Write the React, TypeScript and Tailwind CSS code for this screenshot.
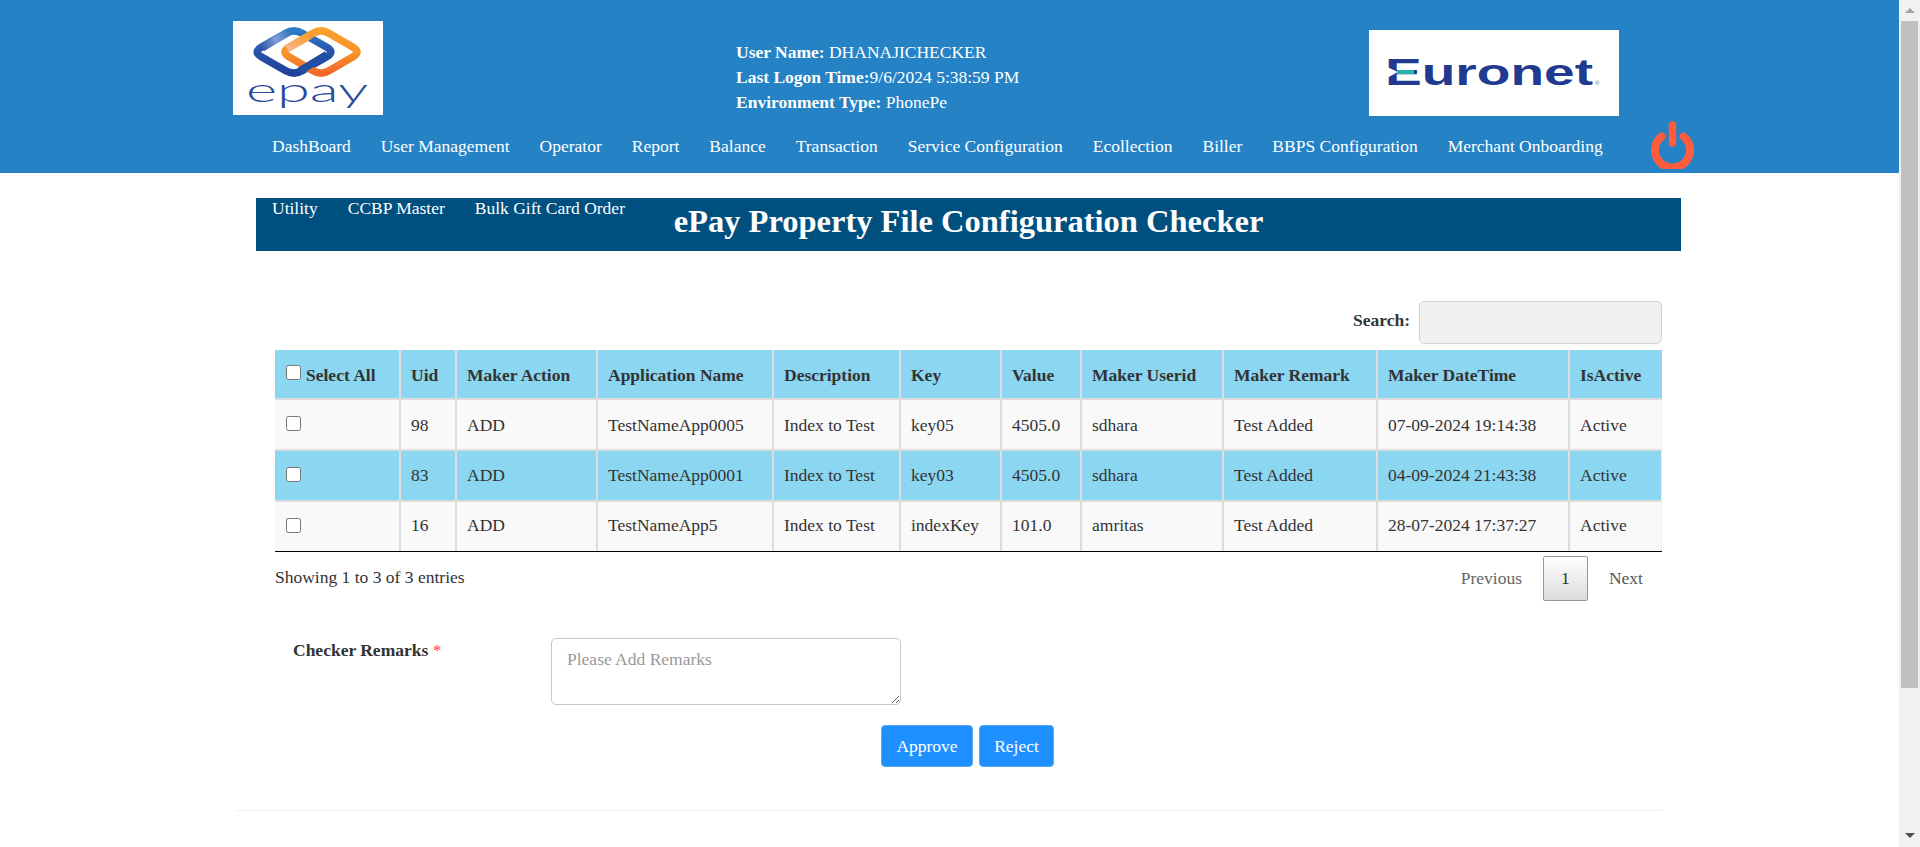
const columns = [
  { label: 'Uid', key: 'uid' },
  { label: 'Maker Action', key: 'action' },
  { label: 'Application Name', key: 'app' },
  { label: 'Description', key: 'desc' },
  { label: 'Key', key: 'key' },
  { label: 'Value', key: 'value' },
  { label: 'Maker Userid', key: 'user' },
  { label: 'Maker Remark', key: 'remark' },
  { label: 'Maker DateTime', key: 'date' },
  { label: 'IsActive', key: 'active' },
] as const;

const rows = [
  { uid: '98', action: 'ADD', app: 'TestNameApp0005', desc: 'Index to Test', key: 'key05', value: '4505.0', user: 'sdhara', remark: 'Test Added', date: '07-09-2024 19:14:38', active: 'Active' },
  { uid: '83', action: 'ADD', app: 'TestNameApp0001', desc: 'Index to Test', key: 'key03', value: '4505.0', user: 'sdhara', remark: 'Test Added', date: '04-09-2024 21:43:38', active: 'Active' },
  { uid: '16', action: 'ADD', app: 'TestNameApp5', desc: 'Index to Test', key: 'indexKey', value: '101.0', user: 'amritas', remark: 'Test Added', date: '28-07-2024 17:37:27', active: 'Active' },
];

const topMenu = ['DashBoard', 'User Management', 'Operator', 'Report', 'Balance', 'Transaction', 'Service Configuration', 'Ecollection', 'Biller', 'BBPS Configuration', 'Merchant Onboarding'];
const subMenu = ['Utility', 'CCBP Master', 'Bulk Gift Card Order'];

// rhombus with soft corners, t = how far along each edge the rounding starts
const diamond = (cx: number, cy: number, a: number, b: number, t = 0.2) => {
  const L = [cx - a, cy];
  const T = [cx, cy - b];
  const R = [cx + a, cy];
  const B = [cx, cy + b];
  const mix = (p: number[], q: number[], k: number) => `${p[0] + (q[0] - p[0]) * k} ${p[1] + (q[1] - p[1]) * k}`;
  return [
    `M${mix(L, T, t)}`,
    `L${mix(T, L, t)} Q${T[0]} ${T[1]} ${mix(T, R, t)}`,
    `L${mix(R, T, t)} Q${R[0]} ${R[1]} ${mix(R, B, t)}`,
    `L${mix(B, R, t)} Q${B[0]} ${B[1]} ${mix(B, L, t)}`,
    `L${mix(L, B, t)} Q${L[0]} ${L[1]} ${mix(L, T, t)} Z`,
  ].join(' ');
};

const EpayLogo = () => (
  <div className="w-[150px] h-[94px] bg-white shrink-0">
    <svg width="150" height="94" viewBox="0 0 150 94">
      <defs>
        <linearGradient id="blueRing" x1="0" y1="0" x2="0" y2="1">
          <stop offset="0" stopColor="#2f7cc6" />
          <stop offset="0.45" stopColor="#2a55ad" />
          <stop offset="1" stopColor="#1f429b" />
        </linearGradient>
        <linearGradient id="orangeRing" x1="0" y1="0" x2="0" y2="1">
          <stop offset="0" stopColor="#f9a02e" />
          <stop offset="0.55" stopColor="#f8922a" />
          <stop offset="1" stopColor="#f2662a" />
        </linearGradient>
        <linearGradient id="blueSheen" gradientUnits="userSpaceOnUse" x1="28" y1="28" x2="58" y2="10">
          <stop offset="0" stopColor="#2a50a8" />
          <stop offset="0.5" stopColor="#829dd5" />
          <stop offset="1" stopColor="#2a78c4" />
        </linearGradient>
        <linearGradient id="orangeSheen" gradientUnits="userSpaceOnUse" x1="54" y1="30" x2="76" y2="15">
          <stop offset="0" stopColor="#f7b896" />
          <stop offset="1" stopColor="#f9a02e" />
        </linearGradient>
      </defs>
      <path d={diamond(61, 31, 41, 23.5)} fill="none" stroke="url(#blueRing)" strokeWidth="7.5" />
      <path d="M29 27 L56 11" fill="none" stroke="url(#blueSheen)" strokeWidth="7.5" />
      <path d={diamond(88, 31, 40, 23.5)} fill="none" stroke="url(#orangeRing)" strokeWidth="7.5" />
      <path d="M54 28 L76 15" fill="none" stroke="url(#orangeSheen)" strokeWidth="7.5" />
      <path d="M94 33.5 L66 50.5" fill="none" stroke="#1f4ea3" strokeWidth="7.5" />
      <text x="13" y="81" fontSize="34" fill="#2b4a9b" textLength="122" lengthAdjust="spacingAndGlyphs" className="font-['Lato',sans-serif] font-light">epay</text>
    </svg>
  </div>
);

const EuronetLogo = () => (
  <div className="w-[250px] h-[86px] bg-white shrink-0">
    <svg width="250" height="86" viewBox="0 0 250 86">
      <text x="16" y="55" fontSize="36" fill="#1f3a8f" textLength="208" lengthAdjust="spacingAndGlyphs" className="font-['Liberation_Sans',sans-serif] font-bold">Euronet</text>
      <polygon points="16,36 29,42 16,49" fill="white" />
      <rect x="28" y="40" width="17" height="4" fill="#1fb8a8" />
      <text x="226" y="55" fontSize="6" fill="#5a6fb0" className="font-['Liberation_Sans',sans-serif]">®</text>
    </svg>
  </div>
);

const PowerIcon = () => (
  <svg width="43" height="48" viewBox="0 0 43 48" className="shrink-0 ml-[48px]">
    <path d="M10.5 15.5 A17.5 17.5 0 1 0 32.5 15.5" fill="none" stroke="#ff5c3e" strokeWidth="8" strokeLinecap="round" />
    <path d="M21.5 4 L21.5 22" fill="none" stroke="#ff5c3e" strokeWidth="7.5" strokeLinecap="round" />
  </svg>
);

const Scrollbar = () => (
  <div className="w-[21px] shrink-0 bg-[#f1f1f1] flex flex-col items-center">
    <div className="h-[21px] flex items-center justify-center">
      <div className="w-0 h-0 border-x-[5px] border-x-transparent border-b-[5px] border-b-[#a3a3a3]" />
    </div>
    <div className="w-[17px] h-[667px] bg-[#c1c1c1]" />
    <div className="flex-1 flex items-end justify-center pb-[9px]">
      <div className="w-0 h-0 border-x-[5px] border-x-transparent border-t-[5px] border-t-[#505050]" />
    </div>
  </div>
);

export default function App() {
  return (
    <div className="flex h-screen overflow-hidden bg-white text-[17.5px] text-[#333] font-['Liberation_Serif',serif]">
      <div className="flex-1 min-w-0">
        {/* Header */}
        <header className="h-[173px] bg-[#2482c5] text-white">
          <div className="flex h-[121px] pl-[233px]">
            <div className="mt-[21px]"><EpayLogo /></div>
            <div className="ml-[353px] w-[633px] mt-[40px] leading-[25px]">
              <div><b>User Name:</b> DHANAJICHECKER</div>
              <div><b>Last Logon Time:</b>9/6/2024 5:38:59 PM</div>
              <div><b>Environment Type:</b> PhonePe</div>
            </div>
            <div className="mt-[30px]"><EuronetLogo /></div>
          </div>
          <nav className="flex items-center h-[48px] pl-[272px]">
            <div className="flex gap-[30px] whitespace-nowrap pt-[2px]">
              {topMenu.map((item) => (
                <span key={item}>{item}</span>
              ))}
            </div>
            <PowerIcon />
          </nav>
        </header>

        {/* Title banner */}
        <div className="relative mt-[25px] mx-[256px] w-[1425px] h-[53px] bg-[#00507f] text-white flex items-center justify-center">
          <h1 className="text-[32.5px] font-bold leading-none mt-[-6px]">ePay Property File Configuration Checker</h1>
          <div className="absolute left-[16px] top-0 flex gap-[30px] leading-[20px]">
            {subMenu.map((item) => (
              <span key={item}>{item}</span>
            ))}
          </div>
        </div>

        <div className="w-[1387px] ml-[275px]">
          {/* Search */}
          <div className="flex justify-end items-center mt-[50px] h-[43px]">
            <label className="font-bold mr-[9px] mb-[4px]">Search:</label>
            <input className="w-[243px] h-[43px] bg-[#f0f0f0] border border-[#d4d4d4] rounded-[5px]" />
          </div>

          {/* Table */}
          <table className="mt-[6px] table-fixed w-[1387px] border-separate border-spacing-0 border-b border-b-black">
            <colgroup>
              {[126, 56, 141, 176, 127, 101, 80, 142, 154, 192, 92].map((w, i) => (
                <col key={i} style={{ width: w }} />
              ))}
            </colgroup>
            <thead>
              <tr className="bg-[#8bd6f1] h-[50px]">
                <th className="text-left font-bold pl-[11px] pt-[2px] border-r-2 border-b-2 border-[#ddd]">
                  <span className="flex items-center">
                    <input type="checkbox" className="w-[15px] h-[15px] mr-[5px] mb-[5px]" />
                    Select All
                  </span>
                </th>
                {columns.map((c, i) => (
                  <th key={c.key} className={`text-left font-bold pl-[10px] pt-[2px] border-b-2 border-[#ddd] ${i < columns.length - 1 ? 'border-r-2' : ''}`}>
                    {c.label}
                  </th>
                ))}
              </tr>
            </thead>
            <tbody>
              {rows.map((row, r) => (
                <tr key={row.uid} className={`${r === 1 ? 'bg-[#8bd6f1]' : 'bg-[#f9f9f9]'} ${r === 2 ? 'h-[49px]' : 'h-[51px]'}`}>
                  <td className={`pl-[11px] border-r-2 border-[#ddd] ${r < 2 ? 'border-b-2' : 'pb-[1px]'}`}>
                    <input type="checkbox" className="block w-[15px] h-[15px] mb-[2px]" />
                  </td>
                  {columns.map((c, i) => (
                    <td key={c.key} className={`pl-[10px] border-[#ddd] ${r === 0 ? 'pt-[2px]' : ''} ${r === 2 ? 'pb-[2px]' : ''} ${r < 2 ? 'border-b-2' : ''} ${i < columns.length - 1 ? 'border-r-2' : 'border-r border-r-[#eee]'}`}>
                      {row[c.key]}
                    </td>
                  ))}
                </tr>
              ))}
            </tbody>
          </table>

          {/* Table footer */}
          <div className="flex justify-between items-start mt-[4px]">
            <div className="mt-[8px]">Showing 1 to 3 of 3 entries</div>
            <div className="flex items-center pr-[19px]">
              <span className="text-[#666]">Previous</span>
              <span className="ml-[21px] w-[45px] h-[45px] flex items-center justify-center border border-[#979797] rounded-[2px] bg-gradient-to-b from-white to-[#dcdcdc]">1</span>
              <span className="ml-[21px] text-[#555]">Next</span>
            </div>
          </div>

          {/* Checker remarks */}
          <div className="flex mt-[37px] ml-[18px]">
            <label className="w-[258px] font-bold leading-[24px]">
              Checker Remarks <span className="text-[#ff3b4e] font-normal">*</span>
            </label>
            <textarea
              placeholder="Please Add Remarks"
              className="w-[350px] h-[67px] border border-[#c8c8c8] rounded-[5px] px-[15px] py-[8px] leading-[24px] placeholder:text-[#999] bg-white"
            />
          </div>

          <div className="flex mt-[20px] ml-[606px] gap-[6px] text-white">
            <button className="w-[92px] h-[42px] bg-[#1e90ff] border border-[#5aa9f2] rounded-[4px]">Approve</button>
            <button className="w-[75px] h-[42px] bg-[#1e90ff] border border-[#5aa9f2] rounded-[4px]">Reject</button>
          </div>
        </div>

        <hr className="mt-[43px] ml-[237px] w-[1425px] border-t border-[#eee]" />
      </div>
      <Scrollbar />
    </div>
  );
}
